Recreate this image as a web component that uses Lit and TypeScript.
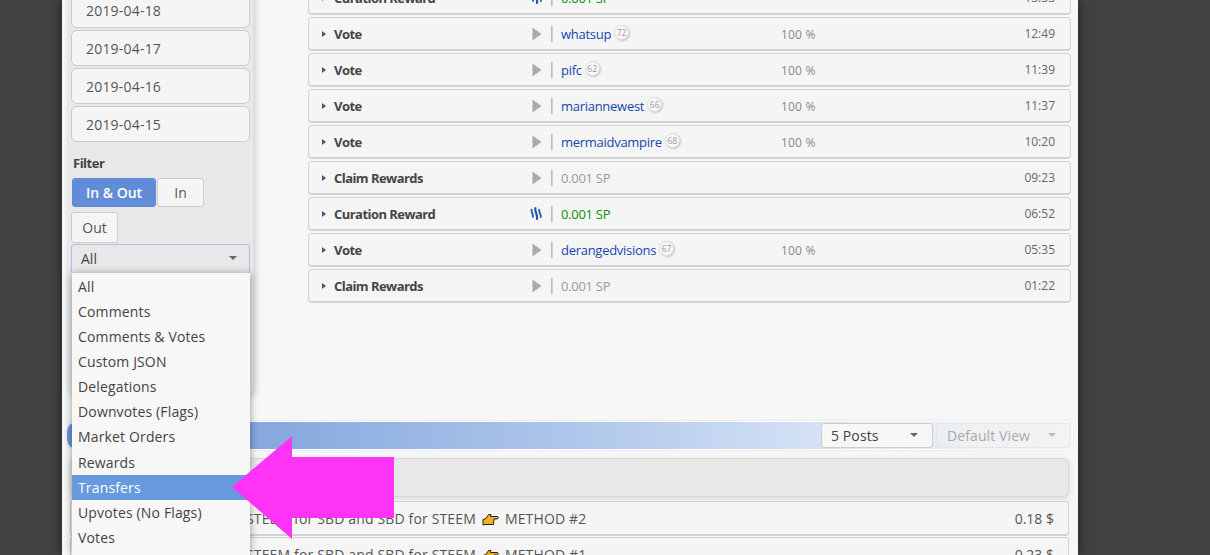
import { LitElement, html, css, svg } from "lit";
import { customElement } from "lit/decorators.js";

type Row = { t: string; kind: "vote" | "claim" | "cur"; v: string; rep?: string; time: string };
const rows: Row[] = [
  { t: "Curation Reward", kind: "cur", v: "0.001 SP", time: "13:33" },
  { t: "Vote", kind: "vote", v: "whatsup", rep: "72", time: "12:49" },
  { t: "Vote", kind: "vote", v: "pifc", rep: "62", time: "11:39" },
  { t: "Vote", kind: "vote", v: "mariannewest", rep: "66", time: "11:37" },
  { t: "Vote", kind: "vote", v: "mermaidvampire", rep: "68", time: "10:20" },
  { t: "Claim Rewards", kind: "claim", v: "0.001 SP", time: "09:23" },
  { t: "Curation Reward", kind: "cur", v: "0.001 SP", time: "06:52" },
  { t: "Vote", kind: "vote", v: "derangedvisions", rep: "67", time: "05:35" },
  { t: "Claim Rewards", kind: "claim", v: "0.001 SP", time: "01:22" },
];
const dates = ["2019-04-18", "2019-04-17", "2019-04-16", "2019-04-15"];
const menu = ["All", "Comments", "Comments & Votes", "Custom JSON", "Delegations", "Downvotes (Flags)", "Market Orders", "Rewards", "Transfers", "Upvotes (No Flags)", "Votes"];

const steem = svg`<svg class="ico" width="13" height="13" viewBox="0 0 13 13"><g fill="none" stroke="#1d5aa6" stroke-linecap="round"><path stroke-width="1.8" d="M1.6 2.6C0.8 5 3.4 7 3 10"/><path stroke-width="2.2" d="M5.4 1.2C4.4 4.5 7.8 7 7 11.8"/><path stroke-width="1.8" d="M9.2 2.6C8.4 5 11.4 7 10.8 10"/></g></svg>`;
const play = svg`<svg class="ico" width="10" height="14" viewBox="0 0 10 14"><path fill="#aaa" d="M0.5 0.5L9.5 7L0.5 13.5Z"/></svg>`;
const hand = svg`<svg class="hand" width="17" height="13" viewBox="0 0 17 13"><path fill="#f5ae1e" stroke="#222" stroke-width="1" stroke-linejoin="round" d="M1 6.5L4 5.5L6.5 1.5L9 1.5L8.5 3.5L15.5 3.5C16.5 4 16.5 5.5 15.5 5.8L12 6L11.5 11.5L3 11.5L1 12Z"/></svg>`;

@customElement("app-root")
export class AppRoot extends LitElement {
  static styles = css`
    :host { display: block; width: 1210px; height: 555px; overflow: hidden; background: #424242; position: relative; font-family: "Open Sans", sans-serif; font-size: 14px; color: #444; }
    .panel { margin-left: 62px; width: 1016px; height: 555px; background: #f7f7f7; box-shadow: 0 0 12px rgba(0,0,0,.55); overflow: hidden; box-sizing: border-box; }
    .top { display: flex; align-items: flex-start; margin-top: -8px; height: 429px; }
    .side { margin-left: 5px; width: 187px; height: 406px; box-sizing: border-box; padding: 0 4px 0 4px; background: #e8e8e8; border-radius: 0 0 10px 10px; border-right: 1px solid #ddd; box-shadow: 2px 0 6px rgba(0,0,0,.15); flex: none; }
    .date { height: 36px; margin-bottom: 2px; box-sizing: border-box; border: 1px solid #ccc; border-radius: 6px; background: #f5f5f5; padding: 1px 0 0 14px; display: flex; align-items: center; width: 179px; color: #555; letter-spacing: .2px; line-height: 20px; }
    .flabel { font-weight: 700; font-size: 13px; color: #444; margin: 12px 0 6px 2px; line-height: 18px; letter-spacing: -.5px; }
    .btns { display: flex; flex-wrap: wrap; gap: 1px; }
    .btn { height: 29px; box-sizing: border-box; border: 1px solid #ccc; border-radius: 3px; background: #f5f5f5; display: flex; align-items: center; justify-content: center; color: #555; }
    .btn.on { width: 84px; margin-left: 1px; background: #628cd8; border-color: #628cd8; color: #fff; font-weight: 600; }
    .btn.in { width: 47px; }
    .btn.out { width: 47px; height: 31px; margin-top: 4px; }
    .sel { width: 179px; height: 30px; margin-top: 1px; box-sizing: border-box; border: 1px solid #a9c3e6; border-radius: 3px; background: #e8e8e8; padding: 0 12px 2px 9px; display: flex; align-items: center; justify-content: space-between; color: #444; }
    .caret { width: 0; height: 0; border: 4px solid transparent; border-top: 4px solid #666; border-bottom: 0; }
    .list { margin-left: 54px; width: 763px; flex: none; margin-top: -11px; }
    .row { height: 34px; margin-bottom: 2px; box-sizing: border-box; border: 1px solid #d2d2d2; border-bottom-width: 2px; border-radius: 4px; background: #f5f5f5; display: grid; grid-template-columns: 205px 20px 15px 220px 1fr; align-items: center; padding: 0 15px 0 12px; }
    .ttl { font-weight: 700; font-size: 13px; color: #444; letter-spacing: -.55px; display: flex; align-items: center; gap: 8px; }
    .tri { width: 0; height: 0; margin-left: 1px; border: 3.5px solid transparent; border-left: 4px solid #555; border-right: 0; }
    .ico { display: block; }
    .icwrap { display: flex; justify-content: center; padding-left: 1px; }
    .sep { width: 2px; height: 16px; background: linear-gradient(90deg, #d9b595 50%, #c2d6e8 50%); margin: 1px 0 0 5px; }
    .val { font-size: 13px; display: flex; align-items: center; gap: 3px; letter-spacing: -.28px; }
    .link { color: #1646ad; }
    .grey { color: #999; }
    .green { color: #0a900a; }
    .rep { width: 13px; height: 13px; border-radius: 50%; border: 1px solid #ddd; background: #f8f8f8; font-size: 8.5px; letter-spacing: 0; color: #999; display: flex; align-items: center; justify-content: center; box-shadow: 1px 1px 2px rgba(0,0,0,.2); margin-top: -3px; }
    .rest { display: flex; justify-content: space-between; align-items: center; }
    .pct { font-size: 12px; color: #888; letter-spacing: .2px; padding-top: 1px; }
    .time { font-size: 12px; color: #666; text-align: right; }
    .bar { margin-left: 5px; width: 1006px; height: 29px; box-sizing: border-box; border-radius: 10px 8px 8px 10px; background: linear-gradient(90deg, #6d95d8 0%, #aec6ea 50%, #d5e2f6 75%, #eff1f3 90%, #f3f3f3 100%); border: 1px solid #fdfdfd; border-width: 1px 2px 1px 0; box-shadow: 0 0 3px rgba(0,0,0,.1); display: flex; justify-content: flex-end; align-items: flex-start; gap: 3px; padding-top: 1px; }
    .bsel { height: 25px; box-sizing: border-box; border: 1px solid #ccc; border-radius: 3px; background: #f7f7f7; display: flex; align-items: center; justify-content: space-between; padding: 0 14px 1px 9px; color: #444; font-size: 14px; letter-spacing: .1px; }
    .bsel.p { width: 112px; }
    .bsel.d { width: 135px; padding-left: 10px; background: transparent; border-color: #e4e7ea; color: #aaa; }
    .bsel.d .caret { border-top-color: #bbb; }
    .head { margin: 8px 0 4px 8px; width: 999px; height: 39px; box-sizing: border-box; border: 1px solid #d8d8d8; border-radius: 6px; background: #e8e8e8; box-shadow: 0 2px 6px rgba(0,0,0,.12); }
    .post { margin-left: 8px; width: 999px; height: 35px; box-sizing: border-box; margin-bottom: 1px; border: 1px solid #d2d2d2; border-bottom-width: 2px; border-radius: 3px; background: #f5f5f5; display: flex; align-items: center; padding: 0 14px 0 175px; color: #555; }
    .post .name { flex: 1; display: flex; align-items: center; gap: 6px; white-space: nowrap; letter-spacing: .15px; }
    .hand { display: block; margin-top: 3px; }
    .menu { position: absolute; left: 72px; top: 273px; width: 178px; height: 282px; background: #f7f7f7; box-shadow: 0 1px 8px rgba(0,0,0,.4); overflow: hidden; padding-top: .85px; box-sizing: border-box; }
    .mi { height: 25.1px; line-height: 25px; padding-left: 6px; color: #444; font-size: 14px; letter-spacing: .15px; }
    .mi.act { background: #6699dd; color: #fff; }
    .arrow { position: absolute; left: 232px; top: 436px; display: block; }
  `;

  renderRow(r: Row) {
    const isVote = r.kind === "vote";
    return html`<div class="row">
      <div class="ttl"><span class="tri"></span>${r.t}</div>
      <div class="icwrap">${r.kind === "cur" ? steem : play}</div>
      <div><div class="sep"></div></div>
      <div class="val">
        ${isVote
          ? html`<span class="link">${r.v}</span><span class="rep">${r.rep}</span>`
          : html`<span class=${r.kind === "cur" ? "green" : "grey"}>${r.v}</span>`}
      </div>
      <div class="rest">
        <span class="pct">${isVote ? "100 %" : ""}</span><span class="time">${r.time}</span>
      </div>
    </div>`;
  }

  render() {
    return html`<div class="panel">
        <div class="top">
          <aside class="side">
            ${dates.map((d) => html`<div class="date">${d}</div>`)}
            <div class="flabel">Filter</div>
            <div class="btns">
              <div class="btn on">In &amp; Out</div>
              <div class="btn in">In</div>
              <div class="btn out">Out</div>
            </div>
            <div class="sel"><span>All</span><span class="caret"></span></div>
          </aside>
          <main class="list">${rows.map((r) => this.renderRow(r))}</main>
        </div>
        <div class="bar">
          <div class="bsel p"><span>5 Posts</span><span class="caret"></span></div>
          <div class="bsel d"><span>Default View</span><span class="caret"></span></div>
        </div>
        <div class="head"></div>
        <div class="post"><div class="name">STEEM for SBD and SBD for STEEM ${hand} METHOD #2</div><span>0.18 $</span></div>
        <div class="post"><div class="name">STEEM for SBD and SBD for STEEM ${hand} METHOD #1</div><span>0.23 $</span></div>
      </div>
      <div class="menu">
        ${menu.map((m) => html`<div class="mi ${m === "Transfers" ? "act" : ""}">${m}</div>`)}
      </div>
      <svg class="arrow" width="163" height="104" viewBox="0 0 163 104"><path fill="#ff33f5" d="M0 51L60 0L60 21L162 21L162 82L60 82L60 103Z"/></svg>`;
  }
}
